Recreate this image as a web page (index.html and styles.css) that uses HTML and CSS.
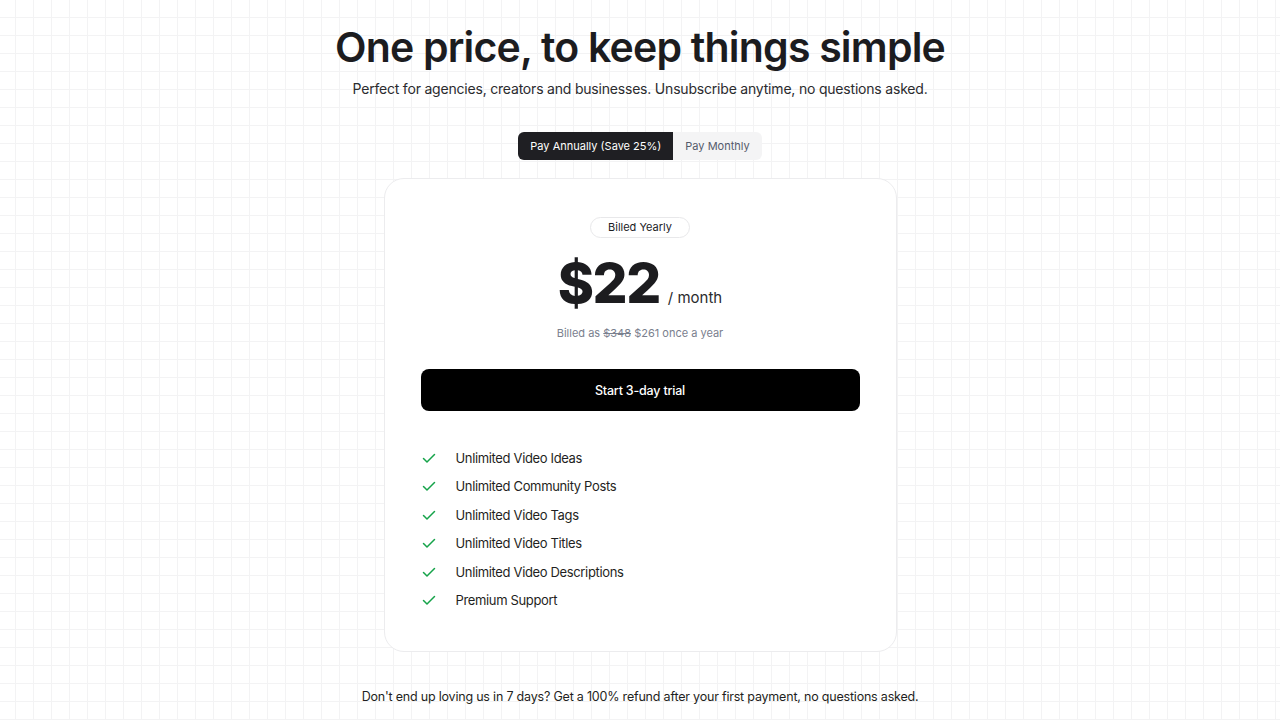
FILE: index.html
```html
<!DOCTYPE html>
<html lang="en">
<head>
    <meta charset="UTF-8">
    <meta name="viewport" content="width=device-width, initial-scale=1.0">
    <title>Pricing</title>
    <link rel="stylesheet" href="styles.css">
</head>
<body>
    <div class="container">
        <header>
            <h1>One price, to keep things simple</h1>
            <p>Perfect for agencies, creators and businesses. Unsubscribe anytime, no questions asked.</p>
        </header>

        <div class="billing-toggle">
            <button class="toggle-option active">Pay Annually (Save 25%)</button>
            <button class="toggle-option">Pay Monthly</button>
        </div>

        <div class="plan-card">
            <span class="badge">Billed Yearly</span>

            <div class="price">
                <span class="amount">$22</span>
                <span class="period">/ month</span>
            </div>

            <p class="billed-note">Billed as <s>$348</s> $261 once a year</p>

            <button class="trial-button">Start 3-day trial</button>

            <ul class="features">
                <li><svg class="check" viewBox="0 0 16 16"><path d="M2.5 8.5l3.5 3.5 7.5-7.5"/></svg>Unlimited Video Ideas</li>
                <li><svg class="check" viewBox="0 0 16 16"><path d="M2.5 8.5l3.5 3.5 7.5-7.5"/></svg>Unlimited Community Posts</li>
                <li><svg class="check" viewBox="0 0 16 16"><path d="M2.5 8.5l3.5 3.5 7.5-7.5"/></svg>Unlimited Video Tags</li>
                <li><svg class="check" viewBox="0 0 16 16"><path d="M2.5 8.5l3.5 3.5 7.5-7.5"/></svg>Unlimited Video Titles</li>
                <li><svg class="check" viewBox="0 0 16 16"><path d="M2.5 8.5l3.5 3.5 7.5-7.5"/></svg>Unlimited Video Descriptions</li>
                <li><svg class="check" viewBox="0 0 16 16"><path d="M2.5 8.5l3.5 3.5 7.5-7.5"/></svg>Premium Support</li>
            </ul>
        </div>

        <p class="refund-note">Don't end up loving us in 7 days? Get a 100% refund after your first payment, no questions asked.</p>
    </div>
</body>
</html>
```

FILE: styles.css
```css
body {
    font-family: Inter, 'Noto Sans', sans-serif;
    margin: 0;
    padding: 0;
    color: #1c1c1f;
    background-color: #ffffff;
    background-image:
        linear-gradient(to right, #f3f3f4 1px, transparent 1px),
        linear-gradient(to bottom, #f3f3f4 1px, transparent 1px);
    background-size: 18px 18px;
    background-position: 15px 17px;
}
.container {
    display: flex;
    flex-direction: column;
    align-items: center;
    padding-top: 22px;
}
header {
    text-align: center;
}
h1 {
    margin: 0;
    font-size: 41px;
    line-height: 50px;
    font-weight: 600;
    letter-spacing: -0.8px;
    color: #1c1c1f;
}
header p {
    margin: 7px 0 0;
    font-size: 14px;
    line-height: 20px;
    letter-spacing: -0.2px;
    color: #2b2b2e;
}
.billing-toggle {
    display: flex;
    margin-top: 33px;
    background-color: #f4f4f5;
    border-radius: 6px;
}
.toggle-option {
    font-family: inherit;
    border: none;
    background: none;
    height: 28px;
    padding: 0 12px;
    font-size: 11px;
    color: #555b6b;
    border-radius: 6px;
    cursor: pointer;
}
.toggle-option.active {
    background-color: #1f1f23;
    color: #ffffff;
    border-radius: 6px 0 0 6px;
}
.plan-card {
    box-sizing: border-box;
    width: 513px;
    margin-top: 18px;
    padding: 38px 36px 43px;
    background-color: #ffffff;
    border: 1px solid #ececee;
    border-radius: 20px;
    display: flex;
    flex-direction: column;
    align-items: center;
}
.badge {
    font-size: 11px;
    line-height: 19px;
    padding: 0 17px;
    border: 1px solid #e8e8ea;
    border-radius: 999px;
    color: #1c1c1f;
}
.price {
    display: flex;
    align-items: baseline;
    gap: 8px;
    margin-top: 12px;
}
.amount {
    font-size: 55px;
    line-height: 66px;
    font-weight: 800;
    letter-spacing: -1.5px;
    color: #1c1c1f;
}
.period {
    font-size: 15px;
    color: #2b2b2e;
}
.billed-note {
    margin: 10px 0 0;
    font-size: 11px;
    color: #7a808e;
}
.trial-button {
    font-family: inherit;
    width: 100%;
    height: 42px;
    margin-top: 29px;
    background-color: #000000;
    color: #ffffff;
    border: none;
    border-radius: 8px;
    font-size: 12.5px;
    font-weight: 500;
    letter-spacing: -0.2px;
    cursor: pointer;
}
.features {
    list-style: none;
    align-self: stretch;
    margin: 39px 0 0;
    padding: 0;
    display: flex;
    flex-direction: column;
    gap: 12.4px;
}
.features li {
    display: flex;
    align-items: center;
    gap: 19px;
    font-size: 13px;
    line-height: 16px;
    letter-spacing: -0.35px;
    color: #1f1f22;
}
.check {
    width: 16px;
    height: 16px;
    fill: none;
    stroke: #16a34a;
    stroke-width: 1.5;
    stroke-linecap: round;
    stroke-linejoin: round;
}
.refund-note {
    margin: 37px 0 0;
    font-size: 12.5px;
    letter-spacing: -0.2px;
    color: #1f1f22;
}
```
